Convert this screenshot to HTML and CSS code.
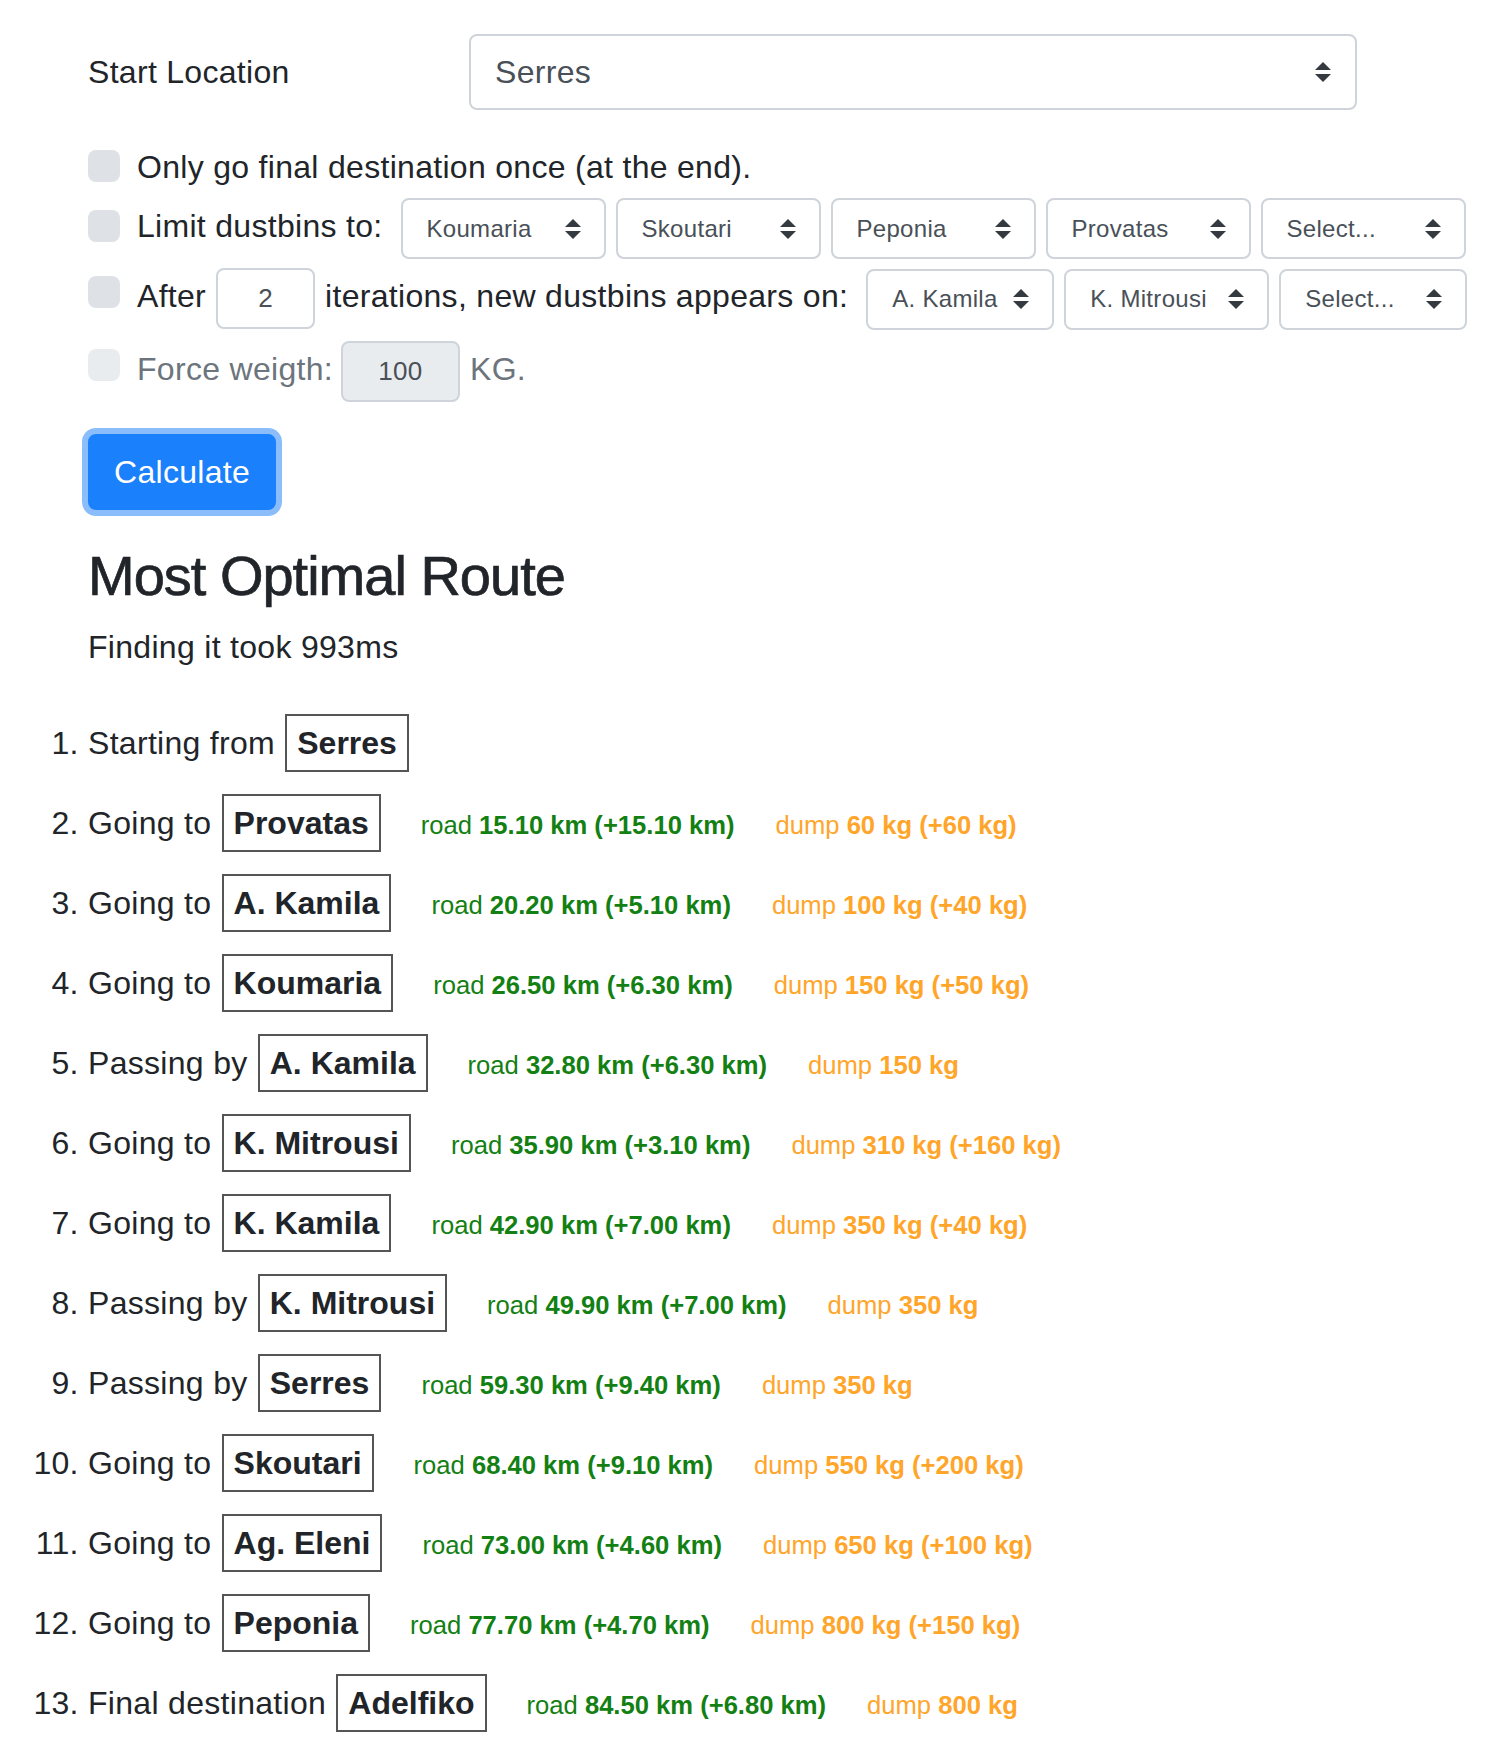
FILE: index.html
```html
<!DOCTYPE html>
<html lang="en">
<head>
<meta charset="utf-8">
<title>Most Optimal Route</title>
<link rel="stylesheet" href="styles.css">
</head>
<body>
<main class="page">
  <form class="route-form">
    <div class="start-row">
      <label class="start-label">Start Location</label>
      <div class="select select-lg"><span>Serres</span><svg class="caret" viewBox="0 0 4 5"><path d="M2 0L0 2h4zm0 5L0 3h4z"/></svg></div>
    </div>

    <div class="check-row row-1">
      <span class="check mt-7"></span>
      <div class="check-body"><span>Only go final destination once (at the end).</span></div>
    </div>

    <div class="check-row row-2">
      <span class="check mt-12"></span>
      <div class="check-body">
        <span>Limit dustbins to:</span>
        <div class="select-group">
          <div class="select select-sm w-205"><span>Koumaria</span><svg class="caret" viewBox="0 0 4 5"><path d="M2 0L0 2h4zm0 5L0 3h4z"/></svg></div>
          <div class="select select-sm w-205"><span>Skoutari</span><svg class="caret" viewBox="0 0 4 5"><path d="M2 0L0 2h4zm0 5L0 3h4z"/></svg></div>
          <div class="select select-sm w-205"><span>Peponia</span><svg class="caret" viewBox="0 0 4 5"><path d="M2 0L0 2h4zm0 5L0 3h4z"/></svg></div>
          <div class="select select-sm w-205"><span>Provatas</span><svg class="caret" viewBox="0 0 4 5"><path d="M2 0L0 2h4zm0 5L0 3h4z"/></svg></div>
          <div class="select select-sm w-205"><span>Select...</span><svg class="caret" viewBox="0 0 4 5"><path d="M2 0L0 2h4zm0 5L0 3h4z"/></svg></div>
        </div>
      </div>
    </div>

    <div class="check-row row-3">
      <span class="check mt-8"></span>
      <div class="check-body">
        <span>After</span>
        <input class="num num-iter" type="text" value="2">
        <span>iterations, new dustbins appears on:</span>
        <div class="select-group">
          <div class="select select-sm w-188"><span>A. Kamila</span><svg class="caret" viewBox="0 0 4 5"><path d="M2 0L0 2h4zm0 5L0 3h4z"/></svg></div>
          <div class="select select-sm w-205"><span>K. Mitrousi</span><svg class="caret" viewBox="0 0 4 5"><path d="M2 0L0 2h4zm0 5L0 3h4z"/></svg></div>
          <div class="select select-sm w-188"><span>Select...</span><svg class="caret" viewBox="0 0 4 5"><path d="M2 0L0 2h4zm0 5L0 3h4z"/></svg></div>
        </div>
      </div>
    </div>

    <div class="check-row row-4 muted">
      <span class="check check-disabled mt-8"></span>
      <div class="check-body">
        <span>Force weigth:</span>
        <input class="num num-weight" type="text" value="100" readonly>
        <span>KG.</span>
      </div>
    </div>

    <div class="actions">
      <button class="btn" type="button">Calculate</button>
    </div>
  </form>

  <h3 class="title">Most Optimal Route</h3>
  <p class="timing">Finding it took 993ms</p>

  <ol class="route">
    <li>Starting from <span class="stop">Serres</span></li>
    <li>Going to <span class="stop">Provatas</span><span class="road">road <b>15.10 km (+15.10 km)</b></span><span class="dump">dump <b>60 kg (+60 kg)</b></span></li>
    <li>Going to <span class="stop">A. Kamila</span><span class="road">road <b>20.20 km (+5.10 km)</b></span><span class="dump">dump <b>100 kg (+40 kg)</b></span></li>
    <li>Going to <span class="stop">Koumaria</span><span class="road">road <b>26.50 km (+6.30 km)</b></span><span class="dump">dump <b>150 kg (+50 kg)</b></span></li>
    <li>Passing by <span class="stop">A. Kamila</span><span class="road">road <b>32.80 km (+6.30 km)</b></span><span class="dump">dump <b>150 kg</b></span></li>
    <li>Going to <span class="stop">K. Mitrousi</span><span class="road">road <b>35.90 km (+3.10 km)</b></span><span class="dump">dump <b>310 kg (+160 kg)</b></span></li>
    <li>Going to <span class="stop">K. Kamila</span><span class="road">road <b>42.90 km (+7.00 km)</b></span><span class="dump">dump <b>350 kg (+40 kg)</b></span></li>
    <li>Passing by <span class="stop">K. Mitrousi</span><span class="road">road <b>49.90 km (+7.00 km)</b></span><span class="dump">dump <b>350 kg</b></span></li>
    <li>Passing by <span class="stop">Serres</span><span class="road">road <b>59.30 km (+9.40 km)</b></span><span class="dump">dump <b>350 kg</b></span></li>
    <li>Going to <span class="stop">Skoutari</span><span class="road">road <b>68.40 km (+9.10 km)</b></span><span class="dump">dump <b>550 kg (+200 kg)</b></span></li>
    <li>Going to <span class="stop">Ag. Eleni</span><span class="road">road <b>73.00 km (+4.60 km)</b></span><span class="dump">dump <b>650 kg (+100 kg)</b></span></li>
    <li>Going to <span class="stop">Peponia</span><span class="road">road <b>77.70 km (+4.70 km)</b></span><span class="dump">dump <b>800 kg (+150 kg)</b></span></li>
    <li>Final destination <span class="stop">Adelfiko</span><span class="road">road <b>84.50 km (+6.80 km)</b></span><span class="dump">dump <b>800 kg</b></span></li>
  </ol>
</main>
</body>
</html>
```

FILE: styles.css
```css
* {
  box-sizing: border-box;
}

html,
body {
  margin: 0;
  background: #fff;
}

body {
  color: #212529;
  font-family: "Liberation Sans", Arial, sans-serif;
  font-size: 32px;
  line-height: 48px;
  letter-spacing: 0.3px;
}

.page {
  padding: 34px 0 0 88px;
}

/* ---------- start location ---------- */
.start-row {
  display: flex;
  align-items: center;
}

.start-label {
  width: 381px;
  flex: none;
}

.select {
  display: flex;
  align-items: center;
  justify-content: space-between;
  flex: none;
  background: #fff;
  border: 2px solid #ced4da;
  border-radius: 8px;
  color: #495057;
}

.select-lg {
  width: 888px;
  height: 76px;
  padding: 0 24px;
  font-size: 32px;
}

.select-sm {
  height: 61px;
  padding: 0 23px 0 24px;
  font-size: 24px;
  line-height: 36px;
}

.w-205 {
  width: 205px;
}

.w-188 {
  width: 188px;
}

.caret {
  width: 16px;
  height: 20px;
  flex: none;
  fill: #343a40;
}

/* ---------- checkbox rows ---------- */
.check-row {
  display: flex;
  align-items: flex-start;
}

.row-1 {
  margin-top: 33px;
}

.row-2 {
  margin-top: 7px;
}

.row-3 {
  margin-top: 9px;
}

.row-4 {
  margin-top: 11px;
}

.check {
  flex: none;
  width: 32px;
  height: 32px;
  margin-right: 17px;
  border-radius: 8px;
  background: #dee2e6;
}

.check-disabled {
  background: #e9ecef;
}

.mt-7 {
  margin-top: 7px;
}

.mt-8 {
  margin-top: 8px;
}

.mt-12 {
  margin-top: 12px;
}

.check-body {
  display: flex;
  align-items: baseline;
  white-space: nowrap;
}

.select-group {
  display: flex;
  align-items: baseline;
  gap: 10px;
  margin-left: 18px;
}

.num {
  height: 61px;
  padding: 0;
  border: 2px solid #ced4da;
  border-radius: 8px;
  background: #fff;
  color: #495057;
  font-family: "Liberation Sans", Arial, sans-serif;
  font-size: 26px;
  letter-spacing: 0.3px;
  text-align: center;
  outline: none;
}

.num-iter {
  width: 99px;
  margin: 0 10px 0 10px;
}

.num-weight {
  width: 119px;
  margin: 0 10px 0 8px;
  background: #e9ecef;
}

.muted {
  color: #6c757d;
}

/* ---------- button ---------- */
.actions {
  margin-top: 32px;
}

.btn {
  padding: 12px 24px;
  border: 2px solid #1a80fc;
  border-radius: 8px;
  background: #1a80fc;
  color: #fff;
  font-family: "Liberation Sans", Arial, sans-serif;
  font-size: 32px;
  line-height: 48px;
  letter-spacing: 0.3px;
  box-shadow: 0 0 0 6px #8bbdfb;
  cursor: pointer;
}

/* ---------- results ---------- */
.title {
  margin: 32px 0 14px;
  font-size: 56px;
  font-weight: 400;
  line-height: 67px;
  letter-spacing: -1px;
  -webkit-text-stroke: 0.7px #212529;
}

.timing {
  margin: 0 0 32px;
}

.route {
  margin: 0;
  padding: 0;
  list-style: decimal outside;
}

.route li {
  padding: 11px 0;
}

.stop {
  display: inline-block;
  margin-left: 1px;
  padding: 3px 10px;
  border: 2px solid #555;
  font-weight: 700;
  letter-spacing: 0;
  line-height: 48px;
}

.road,
.dump {
  font-size: 25.6px;
  line-height: normal;
  letter-spacing: 0;
}

.road {
  margin-left: 40px;
  color: #138013;
}

.dump {
  margin-left: 41px;
  color: #ffa52a;
}
```
